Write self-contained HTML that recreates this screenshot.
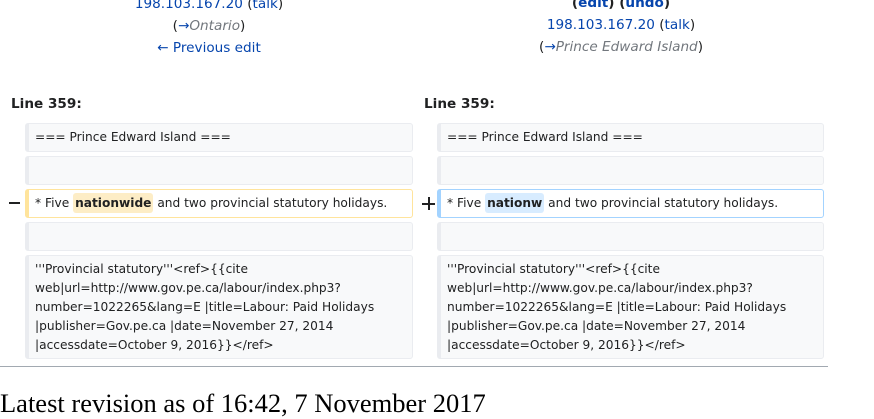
<!DOCTYPE html><html><head><style>
body{margin:0;width:874px;height:401px;overflow:hidden;background:#fff;font-family:"DejaVu Sans","Liberation Sans",sans-serif;color:#202122;position:relative}
.a{position:absolute}
.c{text-align:center;font-size:13.6px;white-space:nowrap}
a{color:#0645ad;text-decoration:none}
.g{color:#72777d;font-style:italic}
.h{font-weight:bold;font-size:13.6px}
.b{position:absolute;box-sizing:border-box;border:1px solid #eaecf0;border-left-width:4px;border-radius:3px;background:#f8f9fa;font-size:12.2px;padding:0 6px;line-height:26px;white-space:nowrap}
.big{line-height:19px;padding-top:4px;white-space:normal}
.d{background:#fff;border-color:#ffe49c}
.ad{background:#fff;border-color:#a3d3ff}
.m{font-weight:bold;border-radius:3px;padding:3px 2px}
</style></head><body>
<div class="a c" style="left:12px;width:394px;top:-4px"><a>198.103.167.20</a> (<a>talk</a>)</div>
<div class="a c" style="left:12px;width:394px;top:18px">(<a>→</a><span class="g">Ontario</span>)</div>
<div class="a c" style="left:12px;width:394px;top:40px"><a>← Previous edit</a></div>
<div class="a c" style="left:411px;width:420px;top:-5px;font-weight:bold">(<a>edit</a>) (<a>undo</a>)</div>
<div class="a c" style="left:411px;width:420px;top:17px"><a>198.103.167.20</a> (<a>talk</a>)</div>
<div class="a c" style="left:411px;width:420px;top:39px">(<a>→</a><span class="g">Prince Edward Island</span>)</div>
<div class="a h" style="left:11px;top:96px">Line 359:</div>
<div class="a h" style="left:424px;top:96px">Line 359:</div>

<div class="b" style="left:25px;top:123px;width:388px;height:29px">=== Prince Edward Island ===</div>
<div class="b" style="left:25px;top:156px;width:388px;height:29px"></div>
<div class="b d" style="left:25px;top:189px;width:388px;height:29px">* Five <span class="m" style="background:#fdedc6">nationwide</span> and two provincial statutory holidays.</div>
<div class="b" style="left:25px;top:222px;width:388px;height:29px"></div>
<div class="b big" style="left:25px;top:255px;width:388px;height:104px">'''Provincial statutory'''&lt;ref&gt;{{cite web|url=http://www.gov.pe.ca/labour/index.php3?number=1022265&amp;lang=E |title=Labour: Paid Holidays |publisher=Gov.pe.ca |date=November 27, 2014 |accessdate=October 9, 2016}}&lt;/ref&gt;</div>

<div class="b" style="left:437px;top:123px;width:387px;height:29px">=== Prince Edward Island ===</div>
<div class="b" style="left:437px;top:156px;width:387px;height:29px"></div>
<div class="b ad" style="left:437px;top:189px;width:387px;height:29px">* Five <span class="m" style="background:#d8ecff">nationw</span> and two provincial statutory holidays.</div>
<div class="b" style="left:437px;top:222px;width:387px;height:29px"></div>
<div class="b big" style="left:437px;top:255px;width:387px;height:104px">'''Provincial statutory'''&lt;ref&gt;{{cite web|url=http://www.gov.pe.ca/labour/index.php3?number=1022265&amp;lang=E |title=Labour: Paid Holidays |publisher=Gov.pe.ca |date=November 27, 2014 |accessdate=October 9, 2016}}&lt;/ref&gt;</div>

<div class="a" style="left:9px;top:202px;width:11px;height:2px;background:#202122"></div>
<div class="a" style="left:422px;top:203px;width:13px;height:2px;background:#202122"></div>
<div class="a" style="left:427.5px;top:197px;width:2px;height:13px;background:#202122"></div>

<div class="a" style="left:0;top:366px;width:828px;height:1px;background:#a2a9b1"></div>
<div class="a" style="left:0;top:388px;font-family:'Liberation Serif',serif;font-size:26.5px;white-space:nowrap;color:#000">Latest revision as of 16:42, 7 November 2017</div>
</body></html>
